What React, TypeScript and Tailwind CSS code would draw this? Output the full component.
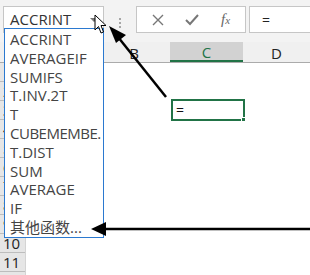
import React from 'react';

const items = [
  'ACCRINT',
  'AVERAGEIF',
  'SUMIFS',
  'T.INV.2T',
  'T',
  'CUBEMEMBE.',
  'T.DIST',
  'SUM',
  'AVERAGE',
  'IF',
  '其他函数...',
];

const rows = [1, 2, 3, 4, 5, 6, 7, 8, 9, 10, 11];

function Cursor() {
  return (
    <svg className="absolute left-[94px] top-[14px]" width="14" height="22" viewBox="0 0 14 22">
      <path d="M1 1 L1 16 L4.5 12.5 L7 19 L9.5 18 L7 11.5 L12 11.5 Z" fill="#fff" stroke="#000" strokeWidth="1" strokeLinejoin="round" />
    </svg>
  );
}

function Arrows() {
  return (
    <svg className="absolute inset-0 pointer-events-none" width="310" height="275" viewBox="0 0 310 275">
      <line x1="166" y1="97" x2="118" y2="37" stroke="#000" strokeWidth="2.5" />
      <polygon points="109,26 126,35 116,43" fill="#000" />
      <line x1="310" y1="229" x2="104" y2="229" stroke="#000" strokeWidth="2.5" />
      <polygon points="91,229 106,222 106,236" fill="#000" />
    </svg>
  );
}

export default function App() {
  return (
    <div className="relative w-[310px] h-[275px] overflow-hidden bg-white font-['Open_Sans','Liberation_Sans',sans-serif] text-[#333]">
      {/* formula bar */}
      <div className="flex h-[42px] bg-[#f3f3f3] pt-[6px] pl-[3px]">
        <div className="relative flex h-[27px] w-[101px] items-center border border-[#c6c6c6] bg-white pl-[6px] text-[15px] leading-none">
          ACCRINT
          <span className="absolute right-[5px] top-[11px] h-0 w-0 border-x-[4px] border-t-[4px] border-x-transparent border-t-[#777]" />
        </div>
        <div className="flex w-[32px] flex-col items-center justify-center gap-[2px] pb-[2px]">
          <span className="h-[2px] w-[2px] bg-[#a6a6a6]" />
          <span className="h-[2px] w-[2px] bg-[#a6a6a6]" />
          <span className="h-[2px] w-[2px] bg-[#a6a6a6]" />
        </div>
        <div className="flex h-[27px] w-[110px] items-center justify-around border border-[#c6c6c6] bg-white px-[4px] text-[#777]">
          <svg width="12" height="12" viewBox="0 0 12 12">
            <path d="M1 1 L11 11 M11 1 L1 11" stroke="#777" strokeWidth="1.4" />
          </svg>
          <svg width="14" height="12" viewBox="0 0 14 12">
            <path d="M1 6 L5 10 L13 1" stroke="#777" strokeWidth="2" fill="none" />
          </svg>
          <span className="font-['Liberation_Serif',serif] text-[15px] italic leading-none text-[#666]">
            f<span className="text-[11px]">x</span>
          </span>
        </div>
        <div className="ml-[3px] flex h-[27px] flex-1 items-center border border-r-0 border-[#c6c6c6] bg-white pl-[12px] text-[14px] text-[#222]">
          =
        </div>
      </div>

      {/* column headers */}
      <div className="flex h-[21px] border-b border-[#ababab] bg-[#f0f0f0] text-[15px] leading-none">
        <div className="w-[25px] border-r border-[#d4d4d4]" />
        <div className="flex w-[73px] items-center justify-center pt-[2px]">A</div>
        <div className="flex w-[72px] items-center justify-center pt-[2px] text-[#222]">B</div>
        <div className="flex w-[73px] items-center justify-center border-b-2 border-[#217346] bg-[#d2d2d2] pt-[2px] text-[#217346]">C</div>
        <div className="flex flex-1 items-center justify-center pt-[2px] text-[#222]">D</div>
      </div>

      {/* sheet */}
      <div className="flex">
        <div className="w-[25px] bg-[#e6e6e6] text-[15px] leading-none text-[#222]">
          {rows.map((r) => (
            <div key={r} className="flex h-[19px] items-center border-b border-[#bdbdbd] pl-[3px]">
              {r}
            </div>
          ))}
          <div className="h-[19px]" />
        </div>
        <div className="flex-1 border-l border-[#d4d4d4]">
          <div className="h-[38px]" />
          <div className="flex">
            <div className="w-[145px]" />
            <div className="relative -mt-[2px] h-[22px] w-[74px] border-2 border-[#217346] pl-[3px] text-[14px] leading-[17px] text-[#111]">
              =
              <span className="absolute -bottom-[3px] -right-[3px] h-[5px] w-[5px] border border-white bg-[#217346]" />
            </div>
          </div>
        </div>
      </div>

      {/* autocomplete list */}
      <div className="absolute left-[4px] top-[28px] flex h-[210px] w-[100px] flex-col overflow-hidden border border-[#2b79d0] bg-white pt-[1px] text-[15px] leading-none text-[#444]">
        {items.map((it) => (
          <div
            key={it}
            className={
              it === 'CUBEMEMBE.'
                ? "flex h-[19px] items-center whitespace-nowrap pl-[5px] tracking-[-0.5px] font-['Open_Sans','Noto_Sans_CJK_SC',sans-serif]"
                : "flex h-[19px] items-center whitespace-nowrap pl-[5px] font-['Open_Sans','Noto_Sans_CJK_SC',sans-serif]"
            }
          >
            {it}
          </div>
        ))}
      </div>

      <Cursor />
      <Arrows />
    </div>
  );
}
